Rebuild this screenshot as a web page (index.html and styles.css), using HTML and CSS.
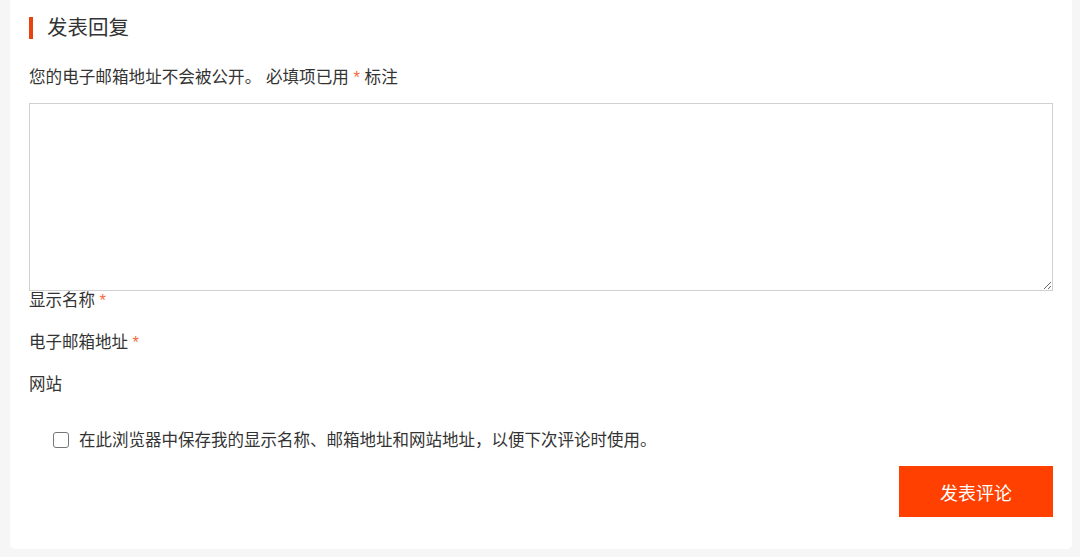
FILE: index.html
```html
<!DOCTYPE html>
<html lang="zh-CN">
<head>
<meta charset="utf-8">
<title>发表回复</title>
<link rel="stylesheet" href="styles.css">
</head>
<body>
<div class="card">
  <h3 class="reply-title">发表回复</h3>
  <p class="notes">您的电子邮箱地址不会被公开。 必填项已用 <span class="req">*</span> 标注</p>
  <textarea class="comment-box"></textarea>
  <p class="field">显示名称 <span class="req">*</span></p>
  <p class="field">电子邮箱地址 <span class="req">*</span></p>
  <p class="field">网站</p>
  <label class="cookies">
    <input type="checkbox" class="check">
    <span>在此浏览器中保存我的显示名称、邮箱地址和网站地址，以便下次评论时使用。</span>
  </label>
  <div class="submit-row">
    <button class="submit">发表评论</button>
  </div>
</div>
</body>
</html>
```

FILE: styles.css
```css
* { box-sizing: border-box; }
html, body {
  margin: 0;
  padding: 0;
  background: #f6f6f6;
  height: 557px;
  overflow: hidden;
}
body {
  font-family: "Liberation Sans", "Noto Sans CJK SC", sans-serif;
  color: #333;
}
.card {
  width: 1062px;
  margin-left: 10px;
  background: #fff;
  border-radius: 0 0 5px 5px;
  padding: 17px 19px 32px 19px;
}
.reply-title {
  margin: 0;
  font-size: 20.5px;
  font-weight: normal;
  line-height: 22px;
  border-left: 4px solid #e8430f;
  padding-left: 14px;
  color: #333;
}
.notes {
  margin: 27px 0 0 0;
  font-size: 16.6px;
  line-height: 24px;
}
.req { color: #f2693d; }
.comment-box {
  display: block;
  width: 100%;
  height: 188px;
  margin: 13px 0 0 0;
  border: 1px solid #d0d0d0;
  border-radius: 0;
  background: #fff;
  resize: vertical;
}
.field {
  margin: 0 0 24px 0;
  font-size: 16.5px;
  line-height: 18px;
}
.cookies {
  display: flex;
  align-items: center;
  gap: 10px;
  margin-top: 38px;
  padding-left: 24px;
  font-size: 16.5px;
  line-height: 18px;
}
.check {
  appearance: none;
  -webkit-appearance: none;
  width: 16px;
  height: 16px;
  margin: 0;
  border: 1.5px solid #767676;
  border-radius: 3px;
  background: #fff;
}
.submit-row {
  display: flex;
  justify-content: flex-end;
  margin-top: 17px;
}
.submit {
  width: 154px;
  height: 51px;
  border: none;
  background: #ff4000;
  color: #fff;
  font-family: "Liberation Sans", "Noto Sans CJK SC", sans-serif;
  font-size: 18px;
  border-radius: 0;
}
```
